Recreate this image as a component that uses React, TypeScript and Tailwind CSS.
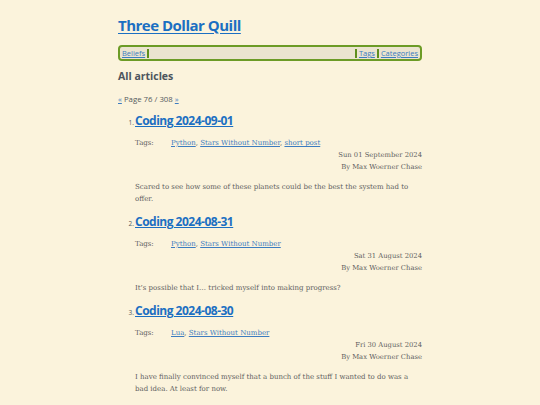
import React from "react";

const posts = [
  {
    n: 1,
    title: "Coding 2024-09-01",
    tags: ["Python", "Stars Without Number", "short post"],
    date: "Sun 01 September 2024",
    excerpt:
      "Scared to see how some of these planets could be the best the system had to offer.",
  },
  {
    n: 2,
    title: "Coding 2024-08-31",
    tags: ["Python", "Stars Without Number"],
    date: "Sat 31 August 2024",
    excerpt: "It\u2019s possible that I\u2026 tricked myself into making progress?",
  },
  {
    n: 3,
    title: "Coding 2024-08-30",
    tags: ["Lua", "Stars Without Number"],
    date: "Fri 30 August 2024",
    excerpt:
      "I have finally convinced myself that a bunch of the stuff I wanted to do was a bad idea. At least for now.",
  },
];

const sans = "font-['Open_Sans',sans-serif]";
const serif = "font-['DejaVu_Serif',serif]";

function Bar() {
  return <span className="block w-[2px] h-[9px] bg-[#5f8f1c] mx-[1px]" />;
}

export default function App() {
  return (
    <div className="w-full h-[405px] overflow-hidden bg-[#fbf3dc]">
      <div className="mx-auto w-[304px] pt-[15px]">
        <h1 className={`${sans} text-[15px] leading-[20px] font-bold tracking-[-0.5px]`}>
          <a className="text-[#1b6fc2] underline underline-offset-2" href="#">
            Three Dollar Quill
          </a>
        </h1>
        <nav
          className={`${sans} mt-[10px] h-[16px] border-2 border-[#6c9b26] rounded-[4px] bg-[#ebe4cf] flex items-center px-[1px] text-[7.5px] leading-[10px]`}
        >
          <a className="text-[#3c7cc0] underline px-[1px]" href="#">
            Beliefs
          </a>
          <Bar />
          <div className="flex-1" />
          <Bar />
          <a className="text-[#3c7cc0] underline px-[1px]" href="#">
            Tags
          </a>
          <Bar />
          <a className="text-[#3c7cc0] underline px-[1px]" href="#">
            Categories
          </a>
        </nav>
        <h2
          className={`${sans} mt-[8px] text-[10.5px] leading-[14px] font-bold text-[#4d555c]`}
        >
          All articles
        </h2>
        <div className={`${sans} mt-[11px] text-[7.8px] leading-[10px] text-[#555b60]`}>
          <a className="text-[#3c7cc0] underline" href="#">
            &laquo;
          </a>{" "}
          Page 76 / 308{" "}
          <a className="text-[#3c7cc0] underline" href="#">
            &raquo;
          </a>
        </div>
        <ol className="mt-[9px]">
          {posts.map((p) => (
            <li key={p.n} className="mb-[9px]">
              <div className="flex items-baseline">
                <span
                  className={`${sans} w-[17px] text-right pr-[1px] text-[6.5px] text-[#555b60]`}
                >
                  {p.n}.
                </span>
                <a
                  className={`${sans} text-[12px] leading-[16px] font-bold text-[#1b6fc2] underline underline-offset-1 tracking-[-0.5px]`}
                  href="#"
                >
                  {p.title}
                </a>
              </div>
              <div className={`${serif} pl-[17px] text-[7px] leading-[12px] text-[#606060]`}>
                <div className="mt-[8px] flex">
                  <span className="w-[36px] shrink-0">Tags:</span>
                  <span>
                    {p.tags.map((t, i) => (
                      <React.Fragment key={t}>
                        <a className="text-[#3c7cc0] underline" href="#">
                          {t}
                        </a>
                        {i < p.tags.length - 1 ? ", " : ""}
                      </React.Fragment>
                    ))}
                  </span>
                </div>
                <div className="text-right text-[6.8px]">{p.date}</div>
                <div className="text-right text-[6.8px]">By Max Woerner Chase</div>
                <p className="mt-[8px] pr-[12px]">{p.excerpt}</p>
              </div>
            </li>
          ))}
        </ol>
      </div>
    </div>
  );
}
